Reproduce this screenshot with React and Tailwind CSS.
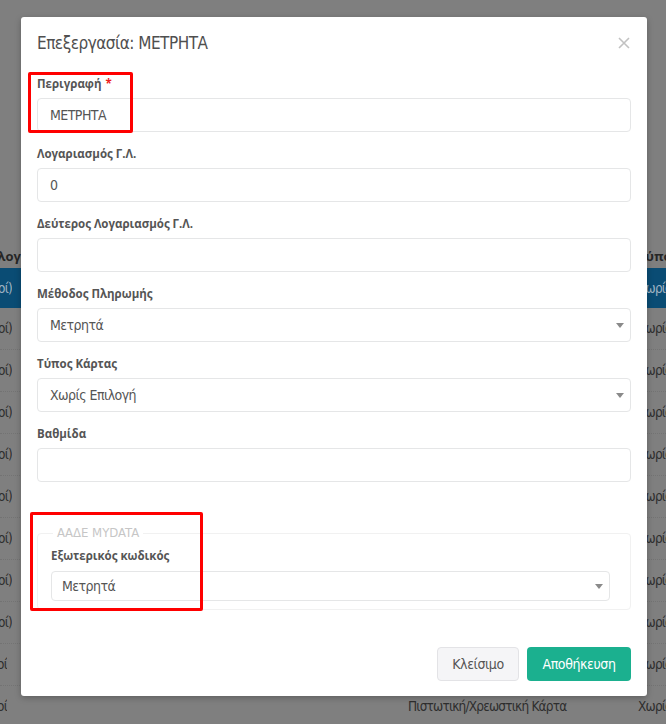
import React from "react";

const narrow = "[font-family:'Liberation_Sans_Narrow','DejaVu_Sans_Condensed',Roboto,sans-serif]";
const labelCls = "block h-[18px] leading-[18px] text-[11.5px] font-bold text-[#555] [font-family:'Open_Sans',sans-serif]";
const inputCls = "h-[34px] w-full rounded-[4px] border border-[#e5e6e7] bg-white flex items-center pl-[12px] pr-[6px] text-[14px] tracking-[-0.55px] text-[#555] " + narrow;

function Caret() {
  return (
    <svg width="8" height="5" viewBox="0 0 8 5" className="ml-auto shrink-0">
      <path d="M0 0 L8 0 L4 5 Z" fill="#8a8a8a" />
    </svg>
  );
}

function Field({ label, value, required, select }) {
  return (
    <div className="mb-[13px]">
      <div className={labelCls + " mb-[5px]"}>
        {label}
        {required && <span className="text-[#ed2020] ml-[4px]">*</span>}
      </div>
      <div className={inputCls}>
        <span>{value}</span>
        {select && <Caret />}
      </div>
    </div>
  );
}

const rows = [
  { blue: true, l: "(Λοιποί)", r: "Χωρίς Επιλογή" },
  { l: "(Λοιποί)", r: "Χωρίς Επιλογή" },
  { l: "(Λοιποί)", r: "Χωρίς Επιλογή" },
  { l: "(Λοιποί)", r: "Χωρίς Επιλογή" },
  { l: "(Λοιποί)", r: "Χωρίς Επιλογή" },
  { l: "(Λοιποί)", r: "Χωρίς Επιλογή" },
  { l: "(Λοιποί)", r: "Χωρίς Επιλογή" },
  { l: "(Λοιποί)", r: "Χωρίς Επιλογή" },
  { l: "(Λοιποί)", r: "Χωρίς Επιλογή" },
  { l: "Λοιποί", r: "Χωρίς Επιλογή", lw: "w-[7px]" },
  { l: "Λοιποί", r: "Χωρίς Επιλογή", mid: "Πιστωτική/Χρεωστική Κάρτα", lw: "w-[7px]" },
];

export default function App() {
  return (
    <div className={"relative w-[666px] h-[724px] overflow-hidden bg-[#7f7f7f] " + narrow}>
      {/* background table (dimmed by backdrop) */}
      <div className="pt-[245px]">
        <div className="flex h-[23px] items-center text-[13px] font-bold text-[#262626] whitespace-nowrap [font-family:'Open_Sans',sans-serif]">
          <div className="w-[21px] shrink-0 flex justify-end overflow-hidden">Αναλογ</div>
          <div className="w-[617px] shrink-0" />
          <div className="shrink-0">Τύπος Κάρτας</div>
        </div>
        {rows.map((r, i) => (
          <div
            key={i}
            className={
              "flex items-center text-[13.5px] tracking-[-0.8px] whitespace-nowrap " +
              (r.blue
                ? "h-[40px] bg-[#0a4c74] text-[#9fb3c2]"
                : "h-[42px] border-b border-dotted border-[#737373] text-[#2e2e2e]")
            }
          >
            <div className="w-[12px] shrink-0 flex">
              <div className={(r.lw || "w-[12px]") + " shrink-0 flex justify-end overflow-hidden"}>{r.l}</div>
            </div>
            <div className="w-[396px] shrink-0" />
            <div className="w-[230px] shrink-0">{r.mid || ""}</div>
            <div className="shrink-0">{r.r}</div>
          </div>
        ))}
      </div>

      {/* modal */}
      <div className="absolute left-[21px] top-[17px] w-[626px] bg-white rounded-[3px] shadow-[0_2px_6px_rgba(0,0,0,0.25)] px-[16px] pt-[14px] pb-[15px]">
        <div className="flex items-center justify-between h-[24px]">
          <div className="text-[17px] tracking-[-0.5px] leading-[24px] text-[#4f4f4f]">Επεξεργασία: ΜΕΤΡΗΤΑ</div>
          <svg width="12" height="12" viewBox="0 0 12 12" className="mr-[1px]">
            <path d="M1 1 L11 11 M11 1 L1 11" stroke="#c2c2c2" strokeWidth="1.6" />
          </svg>
        </div>
        <div className="mt-[20px]">
          <Field label="Περιγραφή" required value="ΜΕΤΡΗΤΑ" />
          <Field label="Λογαριασμός Γ.Λ." value="0" />
          <Field label="Δεύτερος Λογαριασμός Γ.Λ." value="" />
          <Field label="Μέθοδος Πληρωμής" value="Μετρητά" select />
          <Field label="Τύπος Κάρτας" value="Χωρίς Επιλογή" select />
          <Field label="Βαθμίδα" value="" />
        </div>
        <div className="relative mt-[51px] rounded-[4px] border border-[#f1f1f1] pl-[13px] pr-[20px] pt-[13px] pb-[8px]">
          <div className="absolute left-[15px] top-[-10px] bg-white px-[4px] text-[13px] leading-[18px] text-[#c6c6c6]">
            ΑΑΔΕ MYDATA
          </div>
          <div className={labelCls + " mb-[6px]"}>Εξωτερικός κωδικός</div>
          <div className="h-[30px] w-full rounded-[4px] border border-[#e5e6e7] bg-white flex items-center pl-[10px] pr-[6px] text-[14px] tracking-[-0.55px] text-[#555]">
            <span>Μετρητά</span>
            <Caret />
          </div>
        </div>
        <div className="mt-[37px] flex justify-end gap-[8px]">
          <button className="h-[34px] w-[82px] rounded-[4px] border border-[#e3e3e6] bg-[#f5f5f7] text-[14px] tracking-[-0.4px] text-[#555]">
            Κλείσιμο
          </button>
          <button className="h-[34px] w-[104px] rounded-[4px] bg-[#1bb08f] text-[14px] tracking-[-0.4px] text-white">
            Αποθήκευση
          </button>
        </div>
      </div>

      {/* red annotation boxes */}
      <div className="absolute left-[28px] top-[72px] w-[105px] h-[61px] border-[3px] border-[#ff0000] rounded-[2px]" />
      <div className="absolute left-[30px] top-[512px] w-[173px] h-[99px] border-[3px] border-[#ff0000] rounded-[2px]" />
    </div>
  );
}
